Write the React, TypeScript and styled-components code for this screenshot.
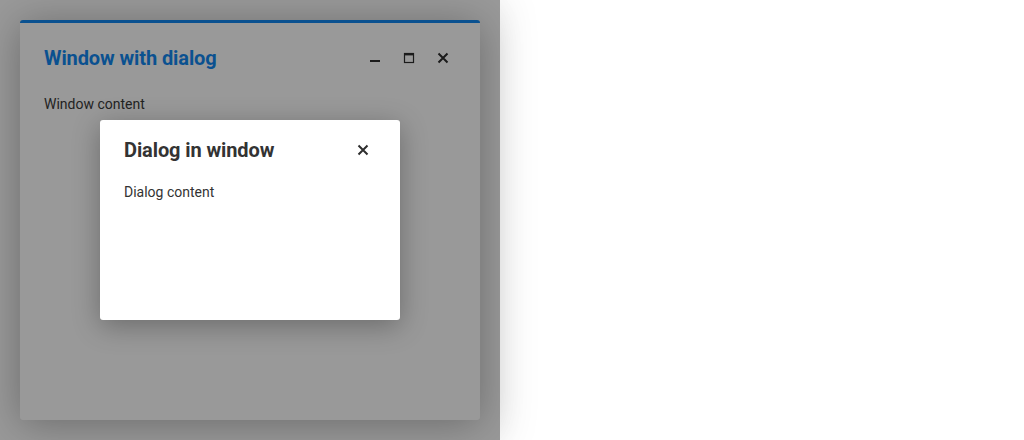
import styled, { createGlobalStyle } from "styled-components"

const GlobalStyle = createGlobalStyle`
    body {
        margin: 0;
        font-family: Roboto, "Liberation Sans", sans-serif;
        background: #ffffff;
    }
`;

const Stage = styled.div`
    position: relative;
    width: 500px;
    height: 440px;
    padding: 20px;
    box-sizing: border-box;
    background: #ffffff;
    box-shadow: 0 0 40px rgba(0, 0, 0, 0.12);
`;

const Window = styled.div`
    width: 460px;
    height: 400px;
    box-sizing: border-box;
    background: #ffffff;
    border-top: 3px solid #1287f0;
    border-radius: 3px;
    box-shadow: 0 4px 40px rgba(0, 0, 0, 0.3);
    display: flex;
    flex-direction: column;
`;

const Header = styled.div`
    display: flex;
    align-items: center;
    justify-content: space-between;
    padding: 20px 25px 0 24px;
    height: 30px;
`;

const Title = styled.h2<{ $color?: string }>`
    margin: 0;
    font-size: 20px;
    font-weight: 700;
    letter-spacing: -0.1px;
    line-height: 30px;
    color: ${p => p.$color || "#333333"};
`;

const Controls = styled.div`
    display: flex;
    gap: 10px;
`;

const IconButton = styled.button`
    width: 24px;
    height: 24px;
    padding: 0;
    border: none;
    background: transparent;
    display: flex;
    align-items: center;
    justify-content: center;
    color: #2e2e2e;
    cursor: pointer;
`;

const Body = styled.div`
    padding: 21px 24px 0 24px;
    font-size: 14px;
    line-height: 20px;
    color: #3a3a3a;
`;

const Overlay = styled.div`
    position: absolute;
    inset: 0;
    background: rgba(0, 0, 0, 0.4);
    display: flex;
    align-items: center;
    justify-content: center;
`;

const Dialog = styled.div`
    width: 300px;
    height: 200px;
    box-sizing: border-box;
    background: #ffffff;
    border-radius: 3px;
    box-shadow: 0 6px 28px rgba(0, 0, 0, 0.3);
    display: flex;
    flex-direction: column;
`;

const DialogHeader = styled(Header)`
    padding: 15px 25px 0 24px;
`;

const DialogBody = styled(Body)`
    padding-top: 17px;
    color: #333333;
`;

const MinimizeIcon = () => (
    <svg width="12" height="12" viewBox="0 0 12 12">
        <rect x="1" y="8" width="10" height="2" fill="currentColor" />
    </svg>
);

const MaximizeIcon = () => (
    <svg width="12" height="12" viewBox="0 0 12 12">
        <rect x="1.5" y="1.5" width="9" height="9" fill="none" stroke="currentColor" strokeWidth="1.2" />
        <rect x="1" y="1" width="10" height="2.4" fill="currentColor" />
    </svg>
);

const CloseIcon = () => (
    <svg width="12" height="12" viewBox="0 0 12 12">
        <path d="M1.5 1.5 L10.5 10.5 M10.5 1.5 L1.5 10.5" stroke="currentColor" strokeWidth="2" />
    </svg>
);

export default function App() {
    return (
        <>
            <GlobalStyle />
            <Stage>
                <Window>
                    <Header>
                        <Title $color="#1287f0">Window with dialog</Title>
                        <Controls>
                            <IconButton><MinimizeIcon /></IconButton>
                            <IconButton><MaximizeIcon /></IconButton>
                            <IconButton><CloseIcon /></IconButton>
                        </Controls>
                    </Header>
                    <Body>Window content</Body>
                </Window>
                <Overlay>
                    <Dialog>
                        <DialogHeader>
                            <Title>Dialog in window</Title>
                            <IconButton><CloseIcon /></IconButton>
                        </DialogHeader>
                        <DialogBody>Dialog content</DialogBody>
                    </Dialog>
                </Overlay>
            </Stage>
        </>
    )
}
